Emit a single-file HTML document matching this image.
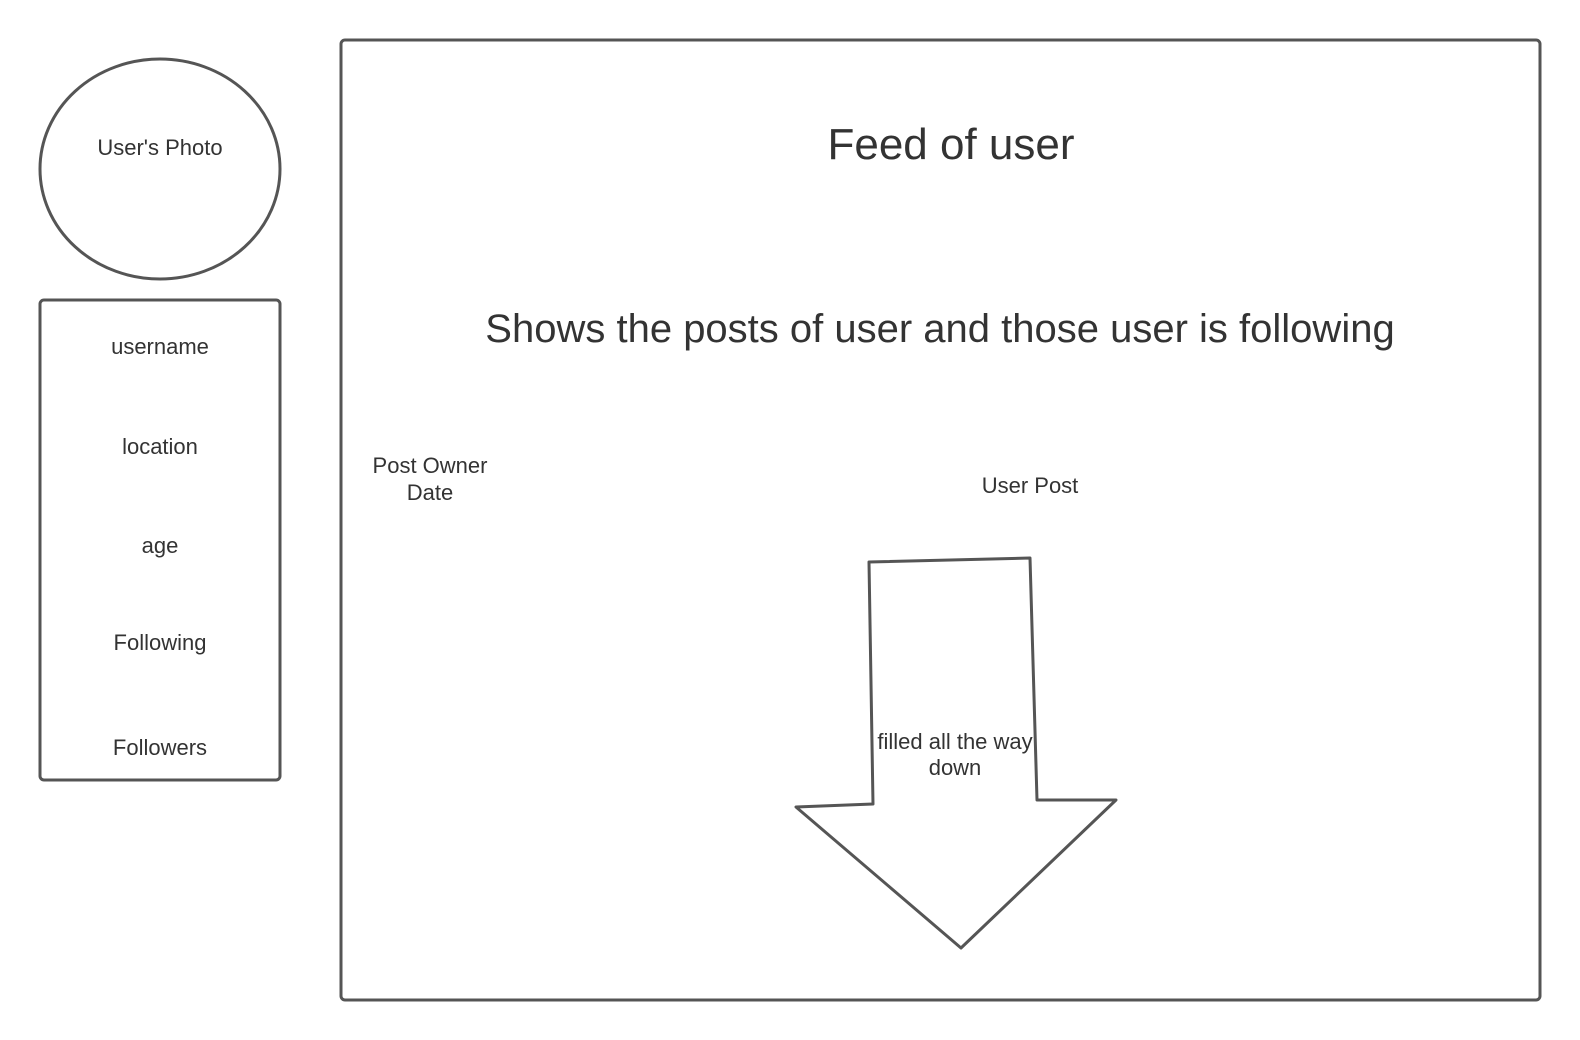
<!DOCTYPE html>
<html><head><meta charset="utf-8"><style>
html,body{margin:0;padding:0;background:#fff;}
svg{display:block;}
text{font-family:"Liberation Sans",sans-serif;fill:#333;}
</style></head><body>
<svg width="1580" height="1040" viewBox="0 0 1580 1040" xmlns="http://www.w3.org/2000/svg">
<g fill="none" stroke="#555" stroke-width="3" stroke-linejoin="round">
<ellipse cx="160" cy="169" rx="120" ry="110"/>
<rect x="40" y="300" width="240" height="480" rx="4"/>
<rect x="341" y="40" width="1199" height="960" rx="4"/>
<path d="M869,562 L1030,558 L1037,800 L1116,800 L961,948 L796,807 L873,804 Z"/>
</g>
<g font-size="22" text-anchor="middle">
<text x="160" y="155">User's Photo</text>
<text x="160" y="354">username</text>
<text x="160" y="454">location</text>
<text x="160" y="553">age</text>
<text x="160" y="650">Following</text>
<text x="160" y="755">Followers</text>
<text x="430" y="473">Post Owner</text>
<text x="430" y="500">Date</text>
<text x="1030" y="493">User Post</text>
<text x="955" y="749">filled all the way</text>
<text x="955" y="775">down</text>
</g>
<text x="951" y="159" font-size="44" text-anchor="middle">Feed of user</text>
<text x="940" y="342" font-size="40" text-anchor="middle">Shows the posts of user and those user is following</text>
</svg>
</body></html>
